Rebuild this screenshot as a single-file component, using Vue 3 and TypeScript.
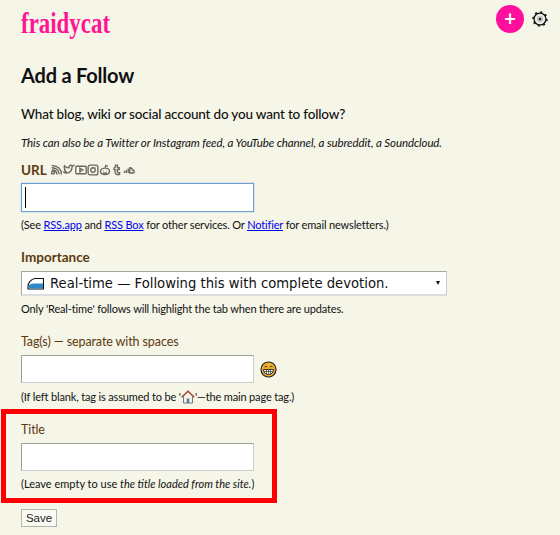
<script setup lang="ts">
const urlIcons = [
  { name: 'rss', d: 'M1 13a2 2 0 1 1 3 0zM1 8c4 0 7 2 7 6M1 5c6 0 10 3 10 9M1 2c8 0 13 5 13 12' },
  { name: 'twitter', d: 'M1 11c5 3 11 0 11-7l2-2-2 .5C11 1 8 1.500 8 5 5 5 3 4 2 2.500 1 5 2 6.500 3 7.500L2 7c0 2 1 3 3 4z' },
  { name: 'youtube', d: 'M2.500 3h11a1.500 1.500 0 0 1 1.500 1.500v7a1.500 1.500 0 0 1-1.500 1.500h-11A1.500 1.500 0 0 1 1 11.500v-7A1.500 1.500 0 0 1 2.500 3zM6.500 5.500v5l4-2.500z' },
  { name: 'instagram', d: 'M4 1.500h8A2.500 2.500 0 0 1 14.500 4v8a2.500 2.500 0 0 1-2.500 2.500H4A2.500 2.500 0 0 1 1.500 12V4A2.500 2.500 0 0 1 4 1.500zM8 5a3 3 0 1 0 0 6 3 3 0 0 0 0-6zM11.500 4h.5' },
  { name: 'reddit', d: 'M8 5.500c-3.500 0-6 1.800-6 4.200S4.500 14 8 14s6-1.900 6-4.300-2.500-4.200-6-4.200zM8 5.500 9 2l3 .8M5.500 9h.5M10 9h.5M5.500 11.500c1.500 1 3.500 1 5 0' },
  { name: 'tumblr', d: 'M6 1.500h2.500V5H11v2.500H8.500v3c0 1.500 1.500 1.800 3 1v2.300c-3 1.200-6 .2-6-2.800v-3.500H4V5.500c1.300-.5 2-2 2-4z' },
  { name: 'soundcloud', d: 'M2 9v3M4.500 7.500V12M7 6v6M9 5c2.500 0 3.500 1.500 3.500 3 1.500 0 2.500 1 2.500 2s-1 2-2 2H9z' }
];
</script>

<template>
  <div class="page">
    <header class="top">
      <div class="logo">fraidycat</div>
      <div class="top-actions">
        <div class="add-btn">+</div>
        <svg class="gear" width="16" height="16" viewBox="0 0 17 17">
          <circle cx="8.500" cy="8.500" r="6.300" fill="#f0f0ea" stroke="#111" stroke-width="1.400" />
          <circle cx="8.500" cy="8.500" r="7.400" fill="none" stroke="#111" stroke-width="1.600" stroke-dasharray="2.300 3.500" />
          <circle cx="8.500" cy="8.500" r="3.400" fill="#c4c4bf" />
          <circle cx="8.500" cy="8.500" r="1.400" fill="#222" />
        </svg>
      </div>
    </header>

    <h2>Add a Follow</h2>
    <p class="ask">What blog, wiki or social account do you want to follow?</p>
    <p class="also"><em>This can also be a Twitter or Instagram feed, a YouTube channel, a subreddit, a Soundcloud.</em></p>

    <div class="url-label">
      <span>URL</span>
      <svg v-for="icon in urlIcons" :key="icon.name" width="12" height="12" viewBox="0 0 16 16">
        <path :d="icon.d" fill="none" stroke="#6b695f" stroke-width="1.800" />
      </svg>
    </div>
    <div class="field url-field">
      <input class="box focused" type="text" />
      <span class="caret"></span>
    </div>
    <p class="note">(See <a href="#">RSS.app</a> and <a href="#">RSS Box</a> for other services. Or <a href="#">Notifier</a> for email newsletters.)</p>

    <div class="imp-label">Importance</div>
    <div class="select">
      <svg width="17" height="13" viewBox="0 0 17 13">
        <path d="M1 12V9.500C1 6 4 2 8 1.500h8.500V12z" fill="#fff" stroke="#111" stroke-width="1.100" />
        <path d="M1.500 11.500V9.800C2 7.500 4 6.500 7 6.500h9v5z" fill="#2f88c7" />
      </svg>
      <span class="select-text">Real-time — Following this with complete devotion.</span>
      <span class="arrow"></span>
    </div>
    <p class="note">Only 'Real-time' follows will highlight the tab when there are updates.</p>

    <div class="tag-label">Tag(s) — separate with spaces</div>
    <div class="field tag-field">
      <input class="box short" type="text" />
      <svg width="17" height="17" viewBox="0 0 17 17">
        <circle cx="8.500" cy="8.500" r="7.500" fill="#f2ad2e" stroke="#222" stroke-width="1.200" />
        <path d="M3.500 8.500h10c0 3-2 5-5 5s-5-2-5-5z" fill="#fff" stroke="#222" stroke-width=".9" />
        <path d="M3.800 10.500h9.400M6.500 8.500v5M8.500 8.500v5M10.500 8.500v5" stroke="#333" stroke-width=".7" />
        <path d="M4.500 6.200c.6-1.200 2-1.200 2.600 0M10 6.200c.6-1.200 2-1.200 2.600 0" fill="none" stroke="#222" stroke-width="1" />
      </svg>
    </div>
    <p class="note tag-note">(If left blank, tag is assumed to be '<svg class="home" width="14" height="14" viewBox="0 0 14 14">
        <path d="M2.500 6.500v6.500h9V6.500" fill="#f1efe6" stroke="#777" stroke-width="1" />
        <path d="M.7 7.200 7 1.200l6.300 6" fill="none" stroke="#a33f2e" stroke-width="1.500" />
        <rect x="5.800" y="8.500" width="2.400" height="4.500" fill="#4a7fb0" />
      </svg>'—the main page tag.)</p>

    <section class="highlight">
      <div class="tag-label title-label">Title</div>
      <input class="box short" type="text" />
      <p class="note leave-note">(Leave empty to use <em>the title loaded from the site.</em>)</p>
    </section>

    <button class="save" type="button">Save</button>
  </div>
</template>

<style>
html, body {
  margin: 0;
  background: #f5f5e8;
}
</style>

<style scoped>
.page {
  width: 560px;
  height: 535px;
  box-sizing: border-box;
  padding: 0 10px 0 21px;
  overflow: hidden;
  background: #f5f5e8;
  color: #111;
  font-family: Lato, "Noto Sans", sans-serif;
  position: relative;
}

.top {
  display: flex;
  justify-content: space-between;
  align-items: flex-start;
  height: 62px;
}

.logo {
  font-family: "Liberation Serif", serif;
  font-weight: 700;
  font-size: 29px;
  line-height: 36px;
  margin-top: 5px;
  color: #ff1493;
  transform: scaleX(0.79);
  transform-origin: left center;
}

.top-actions {
  display: flex;
  align-items: center;
  gap: 8px;
  margin-top: 5px;
}

.add-btn {
  width: 28px;
  height: 28px;
  border-radius: 50%;
  background: #ff0f9b;
  color: #fff;
  font-size: 20px;
  font-weight: 700;
  line-height: 27px;
  text-align: center;
}

.gear {
  display: block;
  margin-right: 2px;
}

h2 {
  margin: 0;
  font-size: 20px;
  line-height: 26px;
  letter-spacing: -0.2px;
  font-weight: 700;
}

.ask {
  margin: 16px 0 0;
  font-size: 13.500px;
  line-height: 20px;
  letter-spacing: -0.18px;
  font-weight: 500;
}

.also {
  margin: 11px 0 0;
  font-size: 11.500px;
  line-height: 16px;
  letter-spacing: -0.1px;
}

.url-label {
  display: flex;
  align-items: center;
  gap: 0;
  margin-top: 9px;
  height: 20px;
  color: #5d3a10;
  font-size: 13.500px;
  font-weight: 700;
}

.url-label span {
  margin-right: 4px;
}

.field {
  display: flex;
  align-items: center;
  gap: 6px;
}

.url-field {
  margin-top: 3px;
  position: relative;
}

.box {
  display: block;
  box-sizing: border-box;
  width: 233px;
  height: 29px;
  margin: 0;
  padding: 1px 3px;
  background: #fff;
  border: 1px solid #a0a09a;
  border-right-color: #ccc;
  border-bottom-color: #ccc;
  border-radius: 0;
  outline: none;
}

.box.short {
  height: 28px;
}

.box.focused {
  border: 1px solid #6d9fd6;
  box-shadow: 0 0 1px #6d9fd6;
}

.caret {
  position: absolute;
  left: 4px;
  top: 4px;
  width: 1px;
  height: 21px;
  background: #000;
}

.note {
  margin: 5px 0 0;
  font-size: 11px;
  line-height: 16px;
  letter-spacing: -0.15px;
  white-space: nowrap;
}

.note a {
  color: #0000ee;
  text-decoration: underline;
}

.tag-note {
  margin-top: 6px;
}

.leave-note {
  letter-spacing: 0;
}

.imp-label {
  margin-top: 14px;
  height: 20px;
  line-height: 20px;
  color: #5d3a10;
  font-size: 13.500px;
  font-weight: 700;
}

.select {
  display: flex;
  align-items: center;
  box-sizing: border-box;
  width: 426px;
  height: 25px;
  margin-top: 4px;
  padding: 0 6px 0 5px;
  background: #fff;
  border: 1px solid #a8a8a2;
  border-right-color: #ccc;
  border-bottom: 2px solid #ddd;
}

.select-text {
  flex: 1;
  margin-left: 6px;
  font-family: "DejaVu Sans", sans-serif;
  font-size: 13.200px;
  white-space: nowrap;
}

.arrow {
  width: 0;
  height: 0;
  border-left: 2.500px solid transparent;
  border-right: 2.500px solid transparent;
  border-top: 4px solid #111;
}

.tag-label {
  margin-top: 15px;
  height: 20px;
  line-height: 20px;
  color: #5d3a10;
  font-size: 12.500px;
  letter-spacing: -0.1px;
}

.tag-field {
  margin-top: 3px;
}

.note svg.home {
  vertical-align: -3px;
}

.highlight {
  box-sizing: border-box;
  width: 276px;
  height: 94px;
  margin: 4px 0 0 -20px;
  padding: 6px 0 0 15px;
  border: 5px solid #ff0000;
}

.highlight .title-label {
  margin-top: 0;
}

.highlight .box {
  margin-top: 3px;
}

.save {
  display: block;
  box-sizing: border-box;
  width: 36px;
  height: 18px;
  margin-top: 6px;
  padding: 0;
  background: #fafaf5;
  border: 1px solid #b5b5ae;
  border-radius: 0;
  color: #222;
  font-family: "Liberation Sans", sans-serif;
  font-size: 11.500px;
  line-height: 16px;
}
</style>
